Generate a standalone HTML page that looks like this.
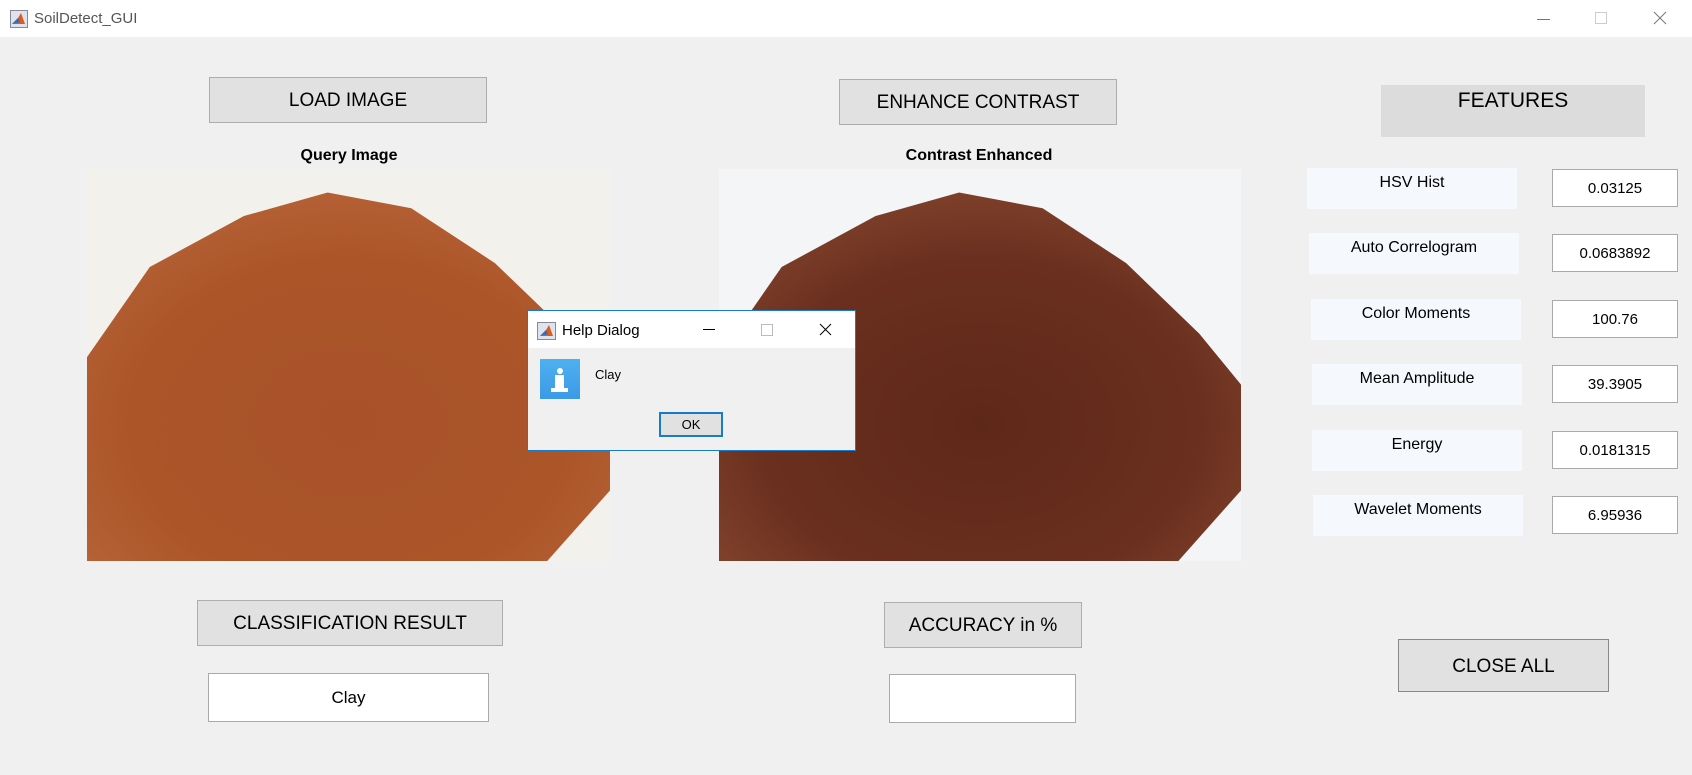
<!DOCTYPE html>
<html><head><meta charset="utf-8"><style>
*{margin:0;padding:0;box-sizing:border-box}
body{width:1692px;height:775px;background:#f0f0f0;font-family:"Liberation Sans",sans-serif;position:relative;overflow:hidden;color:#000}
.a{position:absolute}
.tb{left:0;top:0;width:1692px;height:37px;background:#fff}
.btn{position:absolute;background:#e1e1e1;border:1px solid #adadad;font-size:19px;display:flex;align-items:center;justify-content:center;padding-top:2px}
.lbl{position:absolute;font-weight:bold;font-size:16px;text-align:center}
.img{position:absolute;overflow:hidden}
.pile{position:absolute;left:0;top:0;width:100%;height:100%;clip-path:polygon(0 48%,12% 25%,30% 12%,46% 6%,62% 10%,78% 24%,92% 42%,100% 55%,100% 82%,88% 100%,0 100%)}
.fl{position:absolute;background:#f5f8fc;font-size:16px;text-align:center;padding-top:6px;width:210px;height:41px}
.fv{position:absolute;background:#fff;border:1px solid #aaa;font-size:15px;display:flex;align-items:center;justify-content:center;width:126px;height:38px;left:1552px}
.box{position:absolute;background:#fff;border:1px solid #aaa;font-size:17px;display:flex;align-items:center;justify-content:center}
</style></head><body>
<div class="a tb"></div>
<svg class="a" style="left:10px;top:10px" width="18" height="18"><rect x="0.5" y="0.5" width="17" height="17" fill="#dde4ee" stroke="#889"/><path d="M2 14 L8 8 L11 3 L15 14 Z" fill="#e05a1a"/><path d="M2 14 L8 8 L10 12Z" fill="#2a6fc0"/></svg>
<div class="a" style="left:34px;top:10px;font-size:15px;color:#555">SoilDetect_GUI</div>
<div class="a" style="left:1537px;top:19px;width:13px;height:1px;background:#777"></div>
<div class="a" style="left:1595px;top:12px;width:12px;height:12px;border:1px solid #ccc"></div>
<svg class="a" style="left:1653px;top:11px" width="14" height="14"><path d="M1 1L13 13M13 1L1 13" stroke="#777" stroke-width="1"/></svg>

<div class="btn" style="left:209px;top:77px;width:278px;height:46px">LOAD IMAGE</div>
<div class="lbl" style="left:209px;top:147px;width:280px">Query Image</div>
<div class="img" style="left:87px;top:169px;width:523px;height:392px;background:#f3f1ec">
 <div class="pile" style="background:radial-gradient(ellipse 70% 70% at 50% 65%,#a9522a 0%,#ac5529 60%,#b9683c 100%)"></div>
</div>

<div class="btn" style="left:839px;top:79px;width:278px;height:46px">ENHANCE CONTRAST</div>
<div class="lbl" style="left:839px;top:147px;width:280px">Contrast Enhanced</div>
<div class="img" style="left:719px;top:169px;width:522px;height:392px;background:#f3f5f7">
 <div class="pile" style="background:radial-gradient(ellipse 70% 70% at 50% 65%,#5e2818 0%,#6a2f1f 60%,#8a4a30 100%)"></div>
</div>

<div class="a" style="left:1381px;top:85px;width:264px;height:52px;background:#dcdcdc;font-size:21px;text-align:center;padding-top:4px">FEATURES</div>

<div class="fl" style="left:1307px;top:168px">HSV Hist</div><div class="fv" style="top:169px">0.03125</div>
<div class="fl" style="left:1309px;top:233px">Auto Correlogram</div><div class="fv" style="top:234px">0.0683892</div>
<div class="fl" style="left:1311px;top:299px">Color Moments</div><div class="fv" style="top:300px">100.76</div>
<div class="fl" style="left:1312px;top:364px">Mean Amplitude</div><div class="fv" style="top:365px">39.3905</div>
<div class="fl" style="left:1312px;top:430px">Energy</div><div class="fv" style="top:431px">0.0181315</div>
<div class="fl" style="left:1313px;top:495px">Wavelet Moments</div><div class="fv" style="top:496px">6.95936</div>

<div class="btn" style="left:197px;top:600px;width:306px;height:46px">CLASSIFICATION RESULT</div>
<div class="box" style="left:208px;top:673px;width:281px;height:49px">Clay</div>
<div class="btn" style="left:884px;top:602px;width:198px;height:46px">ACCURACY in %</div>
<div class="box" style="left:889px;top:674px;width:187px;height:49px"></div>
<div class="btn" style="left:1398px;top:639px;width:211px;height:53px;border-color:#888">CLOSE ALL</div>

<div class="a" style="left:527px;top:310px;width:329px;height:141px;background:#f0f0f0;border:1px solid #1979ca">
 <div class="a" style="left:0;top:0;width:327px;height:37px;background:#fff"></div>
 <svg class="a" style="left:9px;top:11px" width="19" height="18"><rect x="0.5" y="0.5" width="18" height="17" fill="#dde4ee" stroke="#889"/><path d="M3 14 L9 8 L12 3 L16 14 Z" fill="#e05a1a"/><path d="M3 14 L9 8 L11 12Z" fill="#2a6fc0"/></svg>
 <div class="a" style="left:34px;top:11px;font-size:15px">Help Dialog</div>
 <div class="a" style="left:175px;top:18px;width:12px;height:1px;background:#000"></div>
 <div class="a" style="left:233px;top:13px;width:12px;height:12px;border:1px solid #bbb"></div>
 <svg class="a" style="left:291px;top:12px" width="13" height="13"><path d="M1 1L12 12M12 1L1 12" stroke="#000"/></svg>
 <div class="a" style="left:12px;top:48px;width:40px;height:40px;background:linear-gradient(#4fb0f0,#3a9ae6)"></div>
 <div class="a" style="left:29px;top:57px;width:6px;height:6px;border-radius:3px;background:#fff"></div>
 <div class="a" style="left:27px;top:64px;width:9px;height:17px;background:#fff"></div>
 <div class="a" style="left:23px;top:77px;width:17px;height:4px;background:#fff"></div>
 <div class="a" style="left:67px;top:56px;font-size:13px">Clay</div>
 <div class="a" style="left:131px;top:101px;width:64px;height:25px;border:2px solid #1979ca;background:#e1e1e1;font-size:13px;text-align:center;line-height:21px">OK</div>
</div>
</body></html>
